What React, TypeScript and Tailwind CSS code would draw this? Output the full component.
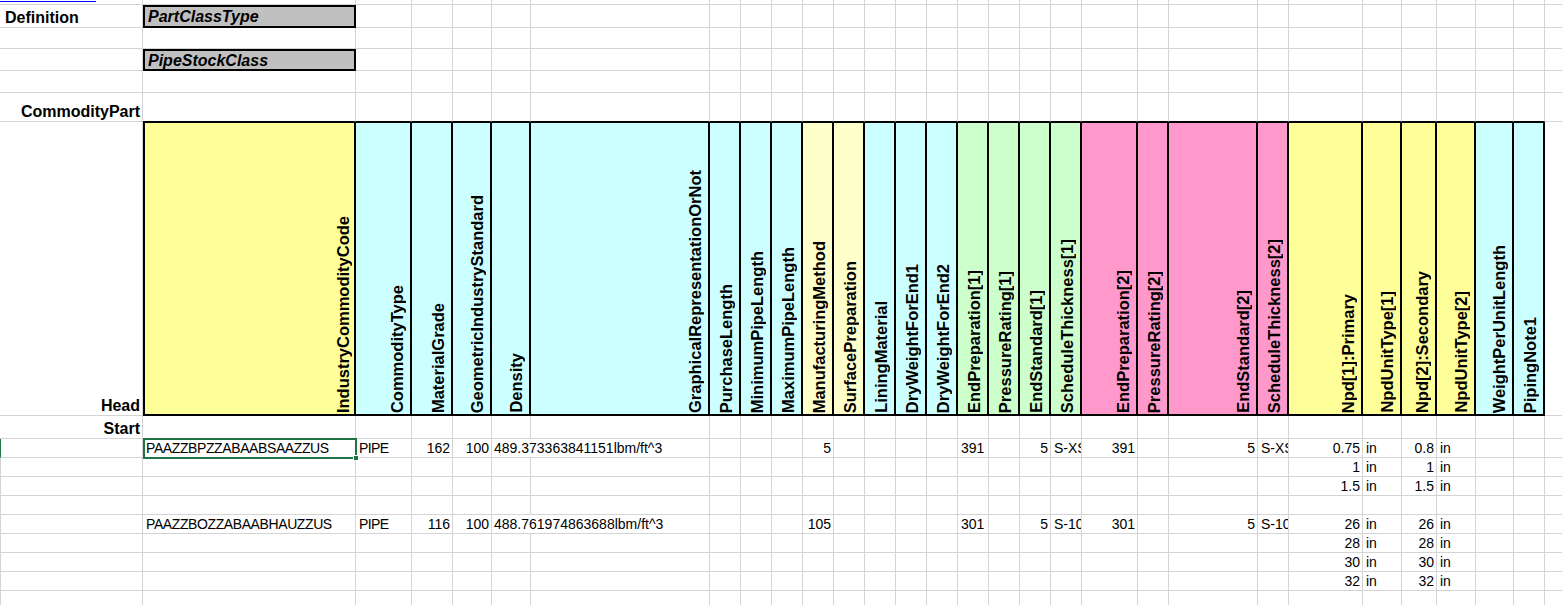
import React from "react";

const GRID =
  "grid grid-cols-[143px_213px_56px_41px_39px_39px_179px_31px_31px_31px_31px_31px_31px_31px_31px_31px_31px_31px_31px_56px_31px_89px_31px_74px_39px_35px_39px_38px_31px_80px] grid-rows-[5px_23px_21px_22px_22px_29px_294px_23px_19px_19px_19px_19px_19px_19px_19px_19px_19px]";

const YEL = "bg-[#ffff99]";
const CYA = "bg-[#ccffff]";
const LYE = "bg-[#ffffcc]";
const GRN = "bg-[#ccffcc]";
const PNK = "bg-[#ff99cc]";

const heads: { label: string; bg: string }[] = [
  { label: "IndustryCommodityCode", bg: YEL },
  { label: "CommodityType", bg: CYA },
  { label: "MaterialGrade", bg: CYA },
  { label: "GeometricIndustryStandard", bg: CYA },
  { label: "Density", bg: CYA },
  { label: "GraphicalRepresentationOrNot", bg: CYA },
  { label: "PurchaseLength", bg: CYA },
  { label: "MinimumPipeLength", bg: CYA },
  { label: "MaximumPipeLength", bg: CYA },
  { label: "ManufacturingMethod", bg: LYE },
  { label: "SurfacePreparation", bg: LYE },
  { label: "LiningMaterial", bg: CYA },
  { label: "DryWeightForEnd1", bg: CYA },
  { label: "DryWeightForEnd2", bg: CYA },
  { label: "EndPreparation[1]", bg: GRN },
  { label: "PressureRating[1]", bg: GRN },
  { label: "EndStandard[1]", bg: GRN },
  { label: "ScheduleThickness[1]", bg: GRN },
  { label: "EndPreparation[2]", bg: PNK },
  { label: "PressureRating[2]", bg: PNK },
  { label: "EndStandard[2]", bg: PNK },
  { label: "ScheduleThickness[2]", bg: PNK },
  { label: "Npd[1]:Primary", bg: YEL },
  { label: "NpdUnitType[1]", bg: YEL },
  { label: "Npd[2]:Secondary", bg: YEL },
  { label: "NpdUnitType[2]", bg: YEL },
  { label: "WeightPerUnitLength", bg: CYA },
  { label: "PipingNote1", bg: CYA },
];

const dataCol: Record<number, string> = {
  1: "pl-[3px] tracking-[-0.4px]",
  2: "pl-[3px] tracking-[-0.6px]",
  3: "justify-end pr-[2px]",
  4: "justify-end pr-[2px]",
  5: "pl-[2px] overflow-visible",
  10: "justify-end pr-[2px]",
  15: "pl-[3px]",
  17: "justify-end pr-[2px]",
  18: "pl-[3px] overflow-hidden",
  19: "justify-end pr-[2px]",
  21: "justify-end pr-[2px]",
  22: "pl-[3px] overflow-hidden",
  23: "justify-end pr-[2px]",
  24: "pl-[3px]",
  25: "justify-end pr-[2px]",
  26: "pl-[3px]",
};

const npd = (a: string, b: string) => ({ 23: a, 24: "in", 25: b, 26: "in" });

const data: Record<number, Record<number, string>> = {
  8: {
    1: "PAAZZBPZZABAABSAAZZUS",
    2: "PIPE",
    3: "162",
    4: "100",
    5: "489.373363841151lbm/ft^3",
    10: "5",
    15: "391",
    17: "5",
    18: "S-XS",
    19: "391",
    21: "5",
    22: "S-XS",
    ...npd("0.75", "0.8"),
  },
  9: npd("1", "1"),
  10: npd("1.5", "1.5"),
  11: {},
  12: {
    1: "PAAZZBOZZABAABHAUZZUS",
    2: "PIPE",
    3: "116",
    4: "100",
    5: "488.761974863688lbm/ft^3",
    10: "105",
    15: "301",
    17: "5",
    18: "S-10",
    19: "301",
    21: "5",
    22: "S-10",
    ...npd("26", "26"),
  },
  13: npd("28", "28"),
  14: npd("30", "30"),
  15: npd("32", "32"),
  16: {},
};

const labelA: Record<number, { text: string; cls: string }> = {
  1: { text: "Definition", cls: "items-end pl-[5px]" },
  5: { text: "CommodityPart", cls: "items-end justify-end pr-[2px]" },
  6: { text: "Head", cls: "items-end justify-end pr-[2px]" },
  7: { text: "Start", cls: "items-end justify-end pr-[2px]" },
};

function renderCell(r: number, c: number) {
  const key = `${r}-${c}`;
  const base = "min-w-0 min-h-0 flex whitespace-nowrap";

  // header row
  if (r === 6 && c >= 1 && c <= 28) {
    const h = heads[c - 1];
    const cls =
      base +
      " items-end justify-end border-t border-b-2 border-r-2 border-black " +
      h.bg +
      (c === 1 ? " border-l-2" : "");
    return (
      <div key={key} className={cls}>
        <span
          className={
            "[writing-mode:vertical-rl] rotate-180 font-bold text-[16.5px] leading-[19px] mb-[1px] " +
            (c === 1 ? "mr-[1px]" : "mr-[3px]")
          }
        >
          {h.label}
        </span>
      </div>
    );
  }

  // gray definition boxes
  if ((r === 1 || r === 3) && c === 1) {
    return (
      <div
        key={key}
        className={
          base +
          " items-start border-2 border-black bg-[#c0c0c0] pl-[3px] font-bold italic text-[16px] leading-[19px]"
        }
      >
        {r === 1 ? "PartClassType" : "PipeStockClass"}
      </div>
    );
  }

  // column A
  if (c === 0) {
    let cls = base + " border-r border-b border-[#d4d4d4]";
    if (r === 8) cls += " border-l border-l-[#217346]";
    if (r >= 9) cls += " border-l border-l-[#d4d4d4]";
    if (r === 0) {
      return (
        <div key={key} className={cls + " items-start"}>
          <div className="mt-[1px] h-[1px] w-[96px] bg-[#0000ff]" />
        </div>
      );
    }
    const l = labelA[r];
    if (l) {
      return (
        <div key={key} className={cls + " font-bold text-[16px] leading-[19px] " + l.cls}>
          {l.text}
        </div>
      );
    }
    return <div key={key} className={cls} />;
  }

  // data rows
  if (r >= 8) {
    const row = data[r] || {};
    const txt = row[c];
    const overflowF = c === 5 && txt !== undefined;
    const cls =
      base +
      (overflowF ? " border-b border-[#d4d4d4]" : " border-r border-b border-[#d4d4d4]") +
      " items-start text-[14px] leading-[19px] " +
      (dataCol[c] || "");
    if (r === 8 && c === 1) {
      return (
        <div key={key} className={cls + " relative"}>
          {txt}
          <div className="pointer-events-none absolute left-0 top-[-1px] z-10 h-[21px] w-[214px] border-2 border-[#217346]">
            <div className="absolute right-[-4px] bottom-[-4px] h-[6px] w-[6px] border border-white bg-[#217346]" />
          </div>
        </div>
      );
    }
    return (
      <div key={key} className={cls}>
        {txt}
      </div>
    );
  }

  // plain grid cells (rows 0-7)
  let cls = base + " border-r border-b border-[#d4d4d4]";
  if (r === 5 && c >= 1 && c <= 28) cls += " border-b-black";
  return <div key={key} className={cls} />;
}

export default function App() {
  const cells: React.ReactNode[] = [];
  for (let r = 0; r < 17; r++) {
    for (let c = 0; c < 30; c++) {
      cells.push(renderCell(r, c));
    }
  }
  return (
    <div className="h-[605px] w-[1562px] overflow-hidden bg-white font-['Liberation_Sans',Arial,sans-serif] text-black">
      <div className={GRID}>{cells}</div>
    </div>
  );
}
